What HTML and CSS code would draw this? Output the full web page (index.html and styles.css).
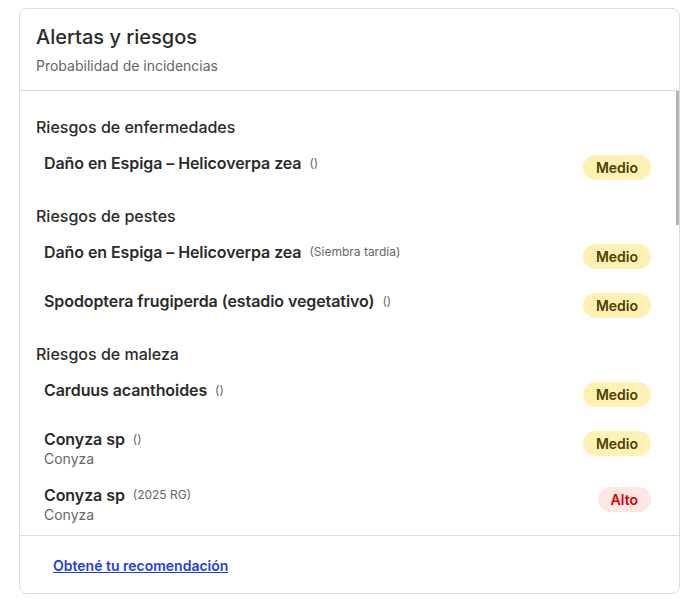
FILE: index.html
```html
<!DOCTYPE html>
<html lang="es">
<head>
<meta charset="utf-8">
<title>Alertas y riesgos</title>
<link rel="stylesheet" href="styles.css">
</head>
<body>
<section class="card">
  <header class="card-header">
    <h2 class="card-title">Alertas y riesgos</h2>
    <p class="card-subtitle">Probabilidad de incidencias</p>
  </header>
  <div class="card-scroll">
    <div class="card-body">
      <div class="group">
        <h3 class="group-title">Riesgos de enfermedades</h3>
        <ul class="risk-list">
          <li class="risk">
            <div class="risk-text">
              <div class="risk-name">Daño en Espiga – Helicoverpa zea <span class="risk-meta">()</span></div>
            </div>
            <span class="badge badge-medium">Medio</span>
          </li>
        </ul>
      </div>
      <div class="group">
        <h3 class="group-title">Riesgos de pestes</h3>
        <ul class="risk-list">
          <li class="risk">
            <div class="risk-text">
              <div class="risk-name">Daño en Espiga – Helicoverpa zea <span class="risk-meta">(Siembra tardía)</span></div>
            </div>
            <span class="badge badge-medium">Medio</span>
          </li>
          <li class="risk">
            <div class="risk-text">
              <div class="risk-name">Spodoptera frugiperda (estadio vegetativo) <span class="risk-meta">()</span></div>
            </div>
            <span class="badge badge-medium">Medio</span>
          </li>
        </ul>
      </div>
      <div class="group">
        <h3 class="group-title">Riesgos de maleza</h3>
        <ul class="risk-list">
          <li class="risk">
            <div class="risk-text">
              <div class="risk-name">Carduus acanthoides <span class="risk-meta">()</span></div>
            </div>
            <span class="badge badge-medium">Medio</span>
          </li>
          <li class="risk">
            <div class="risk-text">
              <div class="risk-name">Conyza sp <span class="risk-meta">()</span></div>
              <div class="risk-sub">Conyza</div>
            </div>
            <span class="badge badge-medium">Medio</span>
          </li>
          <li class="risk">
            <div class="risk-text">
              <div class="risk-name">Conyza sp <span class="risk-meta">(2025 RG)</span></div>
              <div class="risk-sub">Conyza</div>
            </div>
            <span class="badge badge-high">Alto</span>
          </li>
          <li class="risk">
            <div class="risk-text">
              <div class="risk-name">Amaranthus hybridus <span class="risk-meta">()</span></div>
              <div class="risk-sub">Yuyo colorado</div>
            </div>
            <span class="badge badge-high">Alto</span>
          </li>
          <li class="risk">
            <div class="risk-text">
              <div class="risk-name">Amaranthus palmeri <span class="risk-meta">(2025 RG)</span></div>
              <div class="risk-sub">Yuyo colorado</div>
            </div>
            <span class="badge badge-high">Alto</span>
          </li>
          <li class="risk">
            <div class="risk-text">
              <div class="risk-name">Sorghum halepense <span class="risk-meta">()</span></div>
              <div class="risk-sub">Sorgo de Alepo</div>
            </div>
            <span class="badge badge-medium">Medio</span>
          </li>
          <li class="risk">
            <div class="risk-text">
              <div class="risk-name">Eleusine indica <span class="risk-meta">()</span></div>
              <div class="risk-sub">Pata de ganso</div>
            </div>
            <span class="badge badge-medium">Medio</span>
          </li>
          <li class="risk">
            <div class="risk-text">
              <div class="risk-name">Echinochloa colona <span class="risk-meta">()</span></div>
              <div class="risk-sub">Capín</div>
            </div>
            <span class="badge badge-medium">Medio</span>
          </li>
          <li class="risk">
            <div class="risk-text">
              <div class="risk-name">Digitaria sanguinalis <span class="risk-meta">()</span></div>
              <div class="risk-sub">Pasto cuaresma</div>
            </div>
            <span class="badge badge-medium">Medio</span>
          </li>
          <li class="risk">
            <div class="risk-text">
              <div class="risk-name">Chloris virgata <span class="risk-meta">()</span></div>
              <div class="risk-sub">Cloris</div>
            </div>
            <span class="badge badge-medium">Medio</span>
          </li>
          <li class="risk">
            <div class="risk-text">
              <div class="risk-name">Lolium multiflorum <span class="risk-meta">()</span></div>
              <div class="risk-sub">Raigrás</div>
            </div>
            <span class="badge badge-medium">Medio</span>
          </li>
          <li class="risk">
            <div class="risk-text">
              <div class="risk-name">Gomphrena perennis <span class="risk-meta">()</span></div>
              <div class="risk-sub">Gomfrena</div>
            </div>
            <span class="badge badge-medium">Medio</span>
          </li>
          <li class="risk">
            <div class="risk-text">
              <div class="risk-name">Bowlesia incana <span class="risk-meta">()</span></div>
              <div class="risk-sub">Perejilillo</div>
            </div>
            <span class="badge badge-medium">Medio</span>
          </li>
          <li class="risk">
            <div class="risk-text">
              <div class="risk-name">Borreria spp. <span class="risk-meta">()</span></div>
              <div class="risk-sub">Borreria</div>
            </div>
            <span class="badge badge-medium">Medio</span>
          </li>
          <li class="risk">
            <div class="risk-text">
              <div class="risk-name">Commelina erecta <span class="risk-meta">()</span></div>
              <div class="risk-sub">Flor de Santa Lucía</div>
            </div>
            <span class="badge badge-medium">Medio</span>
          </li>
          <li class="risk">
            <div class="risk-text">
              <div class="risk-name">Parietaria debilis <span class="risk-meta">()</span></div>
              <div class="risk-sub">Parietaria</div>
            </div>
            <span class="badge badge-medium">Medio</span>
          </li>
          <li class="risk">
            <div class="risk-text">
              <div class="risk-name">Lamium amplexicaule <span class="risk-meta">()</span></div>
              <div class="risk-sub">Ortiga mansa</div>
            </div>
            <span class="badge badge-medium">Medio</span>
          </li>
        </ul>
      </div>
    </div>
    <div class="scroll-thumb" aria-hidden="true"></div>
  </div>
  <footer class="card-footer">
    <a class="cta" href="#">Obtené tu recomendación</a>
  </footer>
</section>
</body>
</html>
```

FILE: styles.css
```css
* {
  box-sizing: border-box;
}

html, body {
  margin: 0;
  padding: 0;
  background: #ffffff;
}

body {
  padding: 8px 0 0;
  font-family: Inter, "Noto Sans", "Liberation Sans", sans-serif;
  color: #2b2b2b;
}

.card {
  width: 661px;
  height: 586px;
  margin-left: 19px;
  border: 1px solid #dcdcdc;
  border-radius: 8px;
  background: #fff;
  display: flex;
  flex-direction: column;
  overflow: hidden;
}

.card-header {
  padding: 14px 16px 14px;
  border-bottom: 1px solid #dcdcdc;
  flex: none;
}

.card-title {
  margin: 0;
  font-size: 20px;
  line-height: 28px;
  font-weight: 500;
  color: #2b2b2b;
}

.card-subtitle {
  margin: 5px 0 0;
  font-size: 14px;
  line-height: 20px;
  color: #666;
}

.card-scroll {
  position: relative;
  flex: 1;
  min-height: 0;
}

.card-body {
  height: 100%;
  overflow-y: auto;
  scrollbar-width: none;
  padding: 24px 20px 24px 16px;
  display: flex;
  flex-direction: column;
  gap: 12px;
}

.card-body::-webkit-scrollbar {
  display: none;
}

.scroll-thumb {
  position: absolute;
  top: 0;
  right: 0;
  width: 3px;
  height: 134px;
  background: #b4b4b4;
}

.group-title {
  margin: 0 0 8px;
  font-size: 16px;
  line-height: 24px;
  font-weight: 500;
  color: #2b2b2b;
}

.risk-list {
  list-style: none;
  margin: 0;
  padding: 0;
  display: flex;
  flex-direction: column;
  gap: 4px;
}

.risk {
  display: flex;
  align-items: flex-start;
  justify-content: space-between;
  gap: 16px;
  padding: 4px 8px;
}

.risk-name {
  font-size: 16px;
  line-height: 24px;
  font-weight: 600;
  letter-spacing: -0.08px;
  color: #2b2b2b;
}

.risk-meta {
  margin-left: 4px;
  font-size: 12px;
  font-weight: 400;
  letter-spacing: 0;
  color: #666;
  vertical-align: 2px;
}

.risk-sub {
  font-size: 14px;
  line-height: 16px;
  margin-bottom: 4px;
  color: #666;
}

.badge {
  flex: none;
  margin: 4px 0 8px;
  height: 25px;
  padding: 0 13px;
  border-radius: 13px;
  font-size: 14px;
  line-height: 25px;
  font-weight: 600;
}

.badge-medium {
  background: #fff0b3;
  color: #4d3f00;
}

.badge-high {
  background: #fee6e5;
  color: #dd0000;
}

.card-footer {
  flex: none;
  border-top: 1px solid #dcdcdc;
  padding: 11px 16px 8px;
}

.cta {
  display: inline-block;
  padding: 9px 17px;
  font-size: 14px;
  line-height: 20px;
  font-weight: 600;
  color: #1f3ee0;
  text-decoration: underline;
}
```
